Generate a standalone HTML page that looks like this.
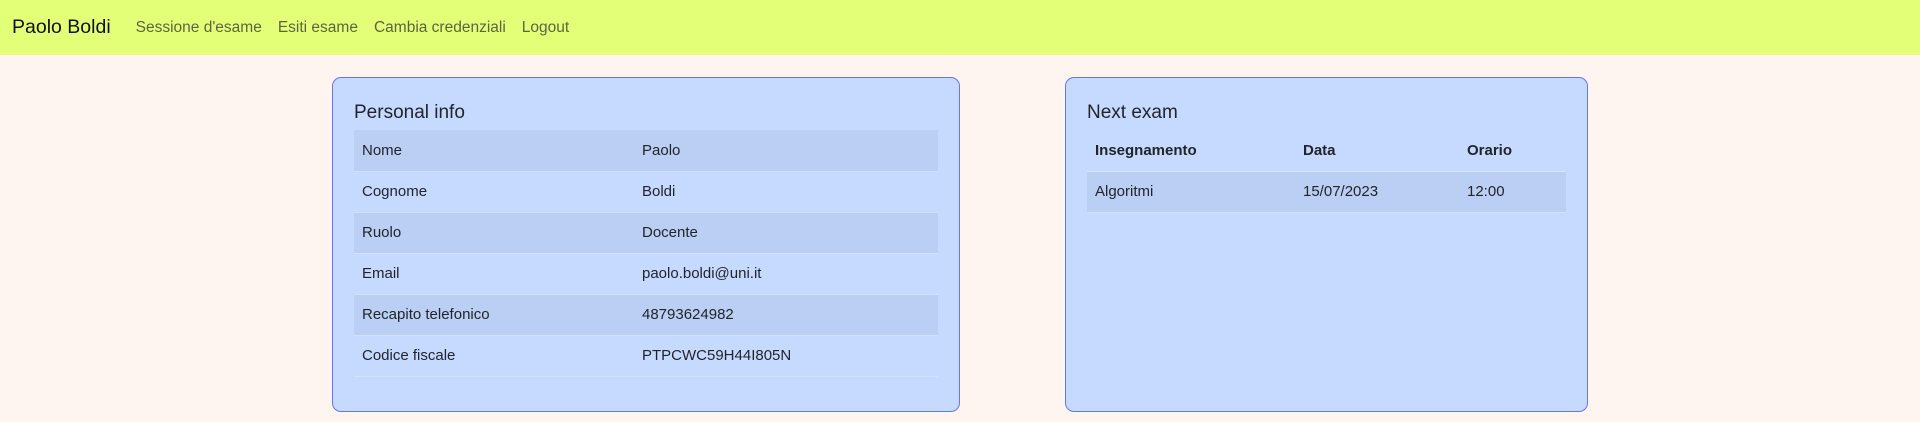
<!DOCTYPE html>
<html><head><style>
*{box-sizing:border-box;margin:0;padding:0}
body{width:1920px;height:422px;background:#fff5f0;font-family:"Liberation Sans",sans-serif;color:#212529;position:relative;overflow:hidden}
.nav{height:55px;background:#e3ff78;display:flex;align-items:center;padding-left:12px}
.brand{font-size:19.5px;color:#111;margin-right:25px}
.nav a{font-size:15.5px;color:#5f6340;margin-right:16px;text-decoration:none}
.card{position:absolute;top:77px;height:335px;background:#c6daff;border:1px solid #6677ee;border-radius:9px;padding:0 21px}
.card h2{font-size:19px;font-weight:normal;margin-top:20px;height:32px;line-height:29px}
table{width:100%;border-collapse:collapse;font-size:15px}
td,th{height:41px;padding:0 8px;text-align:left;border-bottom:1px solid #d6e1f7}
tr.s td{background:#bacff3}
th{font-weight:bold;border-bottom:1px solid #dde6f8}
</style></head><body>
<div class="nav"><span class="brand">Paolo Boldi</span><a>Sessione d'esame</a><a>Esiti esame</a><a>Cambia credenziali</a><a>Logout</a></div>
<div class="card" style="left:332px;width:628px">
<h2>Personal info</h2>
<table>
<tr class="s"><td style="width:280px">Nome</td><td>Paolo</td></tr>
<tr><td>Cognome</td><td>Boldi</td></tr>
<tr class="s"><td>Ruolo</td><td>Docente</td></tr>
<tr><td>Email</td><td>paolo.boldi@uni.it</td></tr>
<tr class="s"><td>Recapito telefonico</td><td>48793624982</td></tr>
<tr><td>Codice fiscale</td><td>PTPCWC59H44I805N</td></tr>
</table></div>
<div class="card" style="left:1065px;width:523px">
<h2>Next exam</h2>
<table>
<tr><th style="width:208px">Insegnamento</th><th style="width:164px">Data</th><th>Orario</th></tr>
<tr class="s"><td>Algoritmi</td><td>15/07/2023</td><td>12:00</td></tr>
</table></div>
</body></html>
